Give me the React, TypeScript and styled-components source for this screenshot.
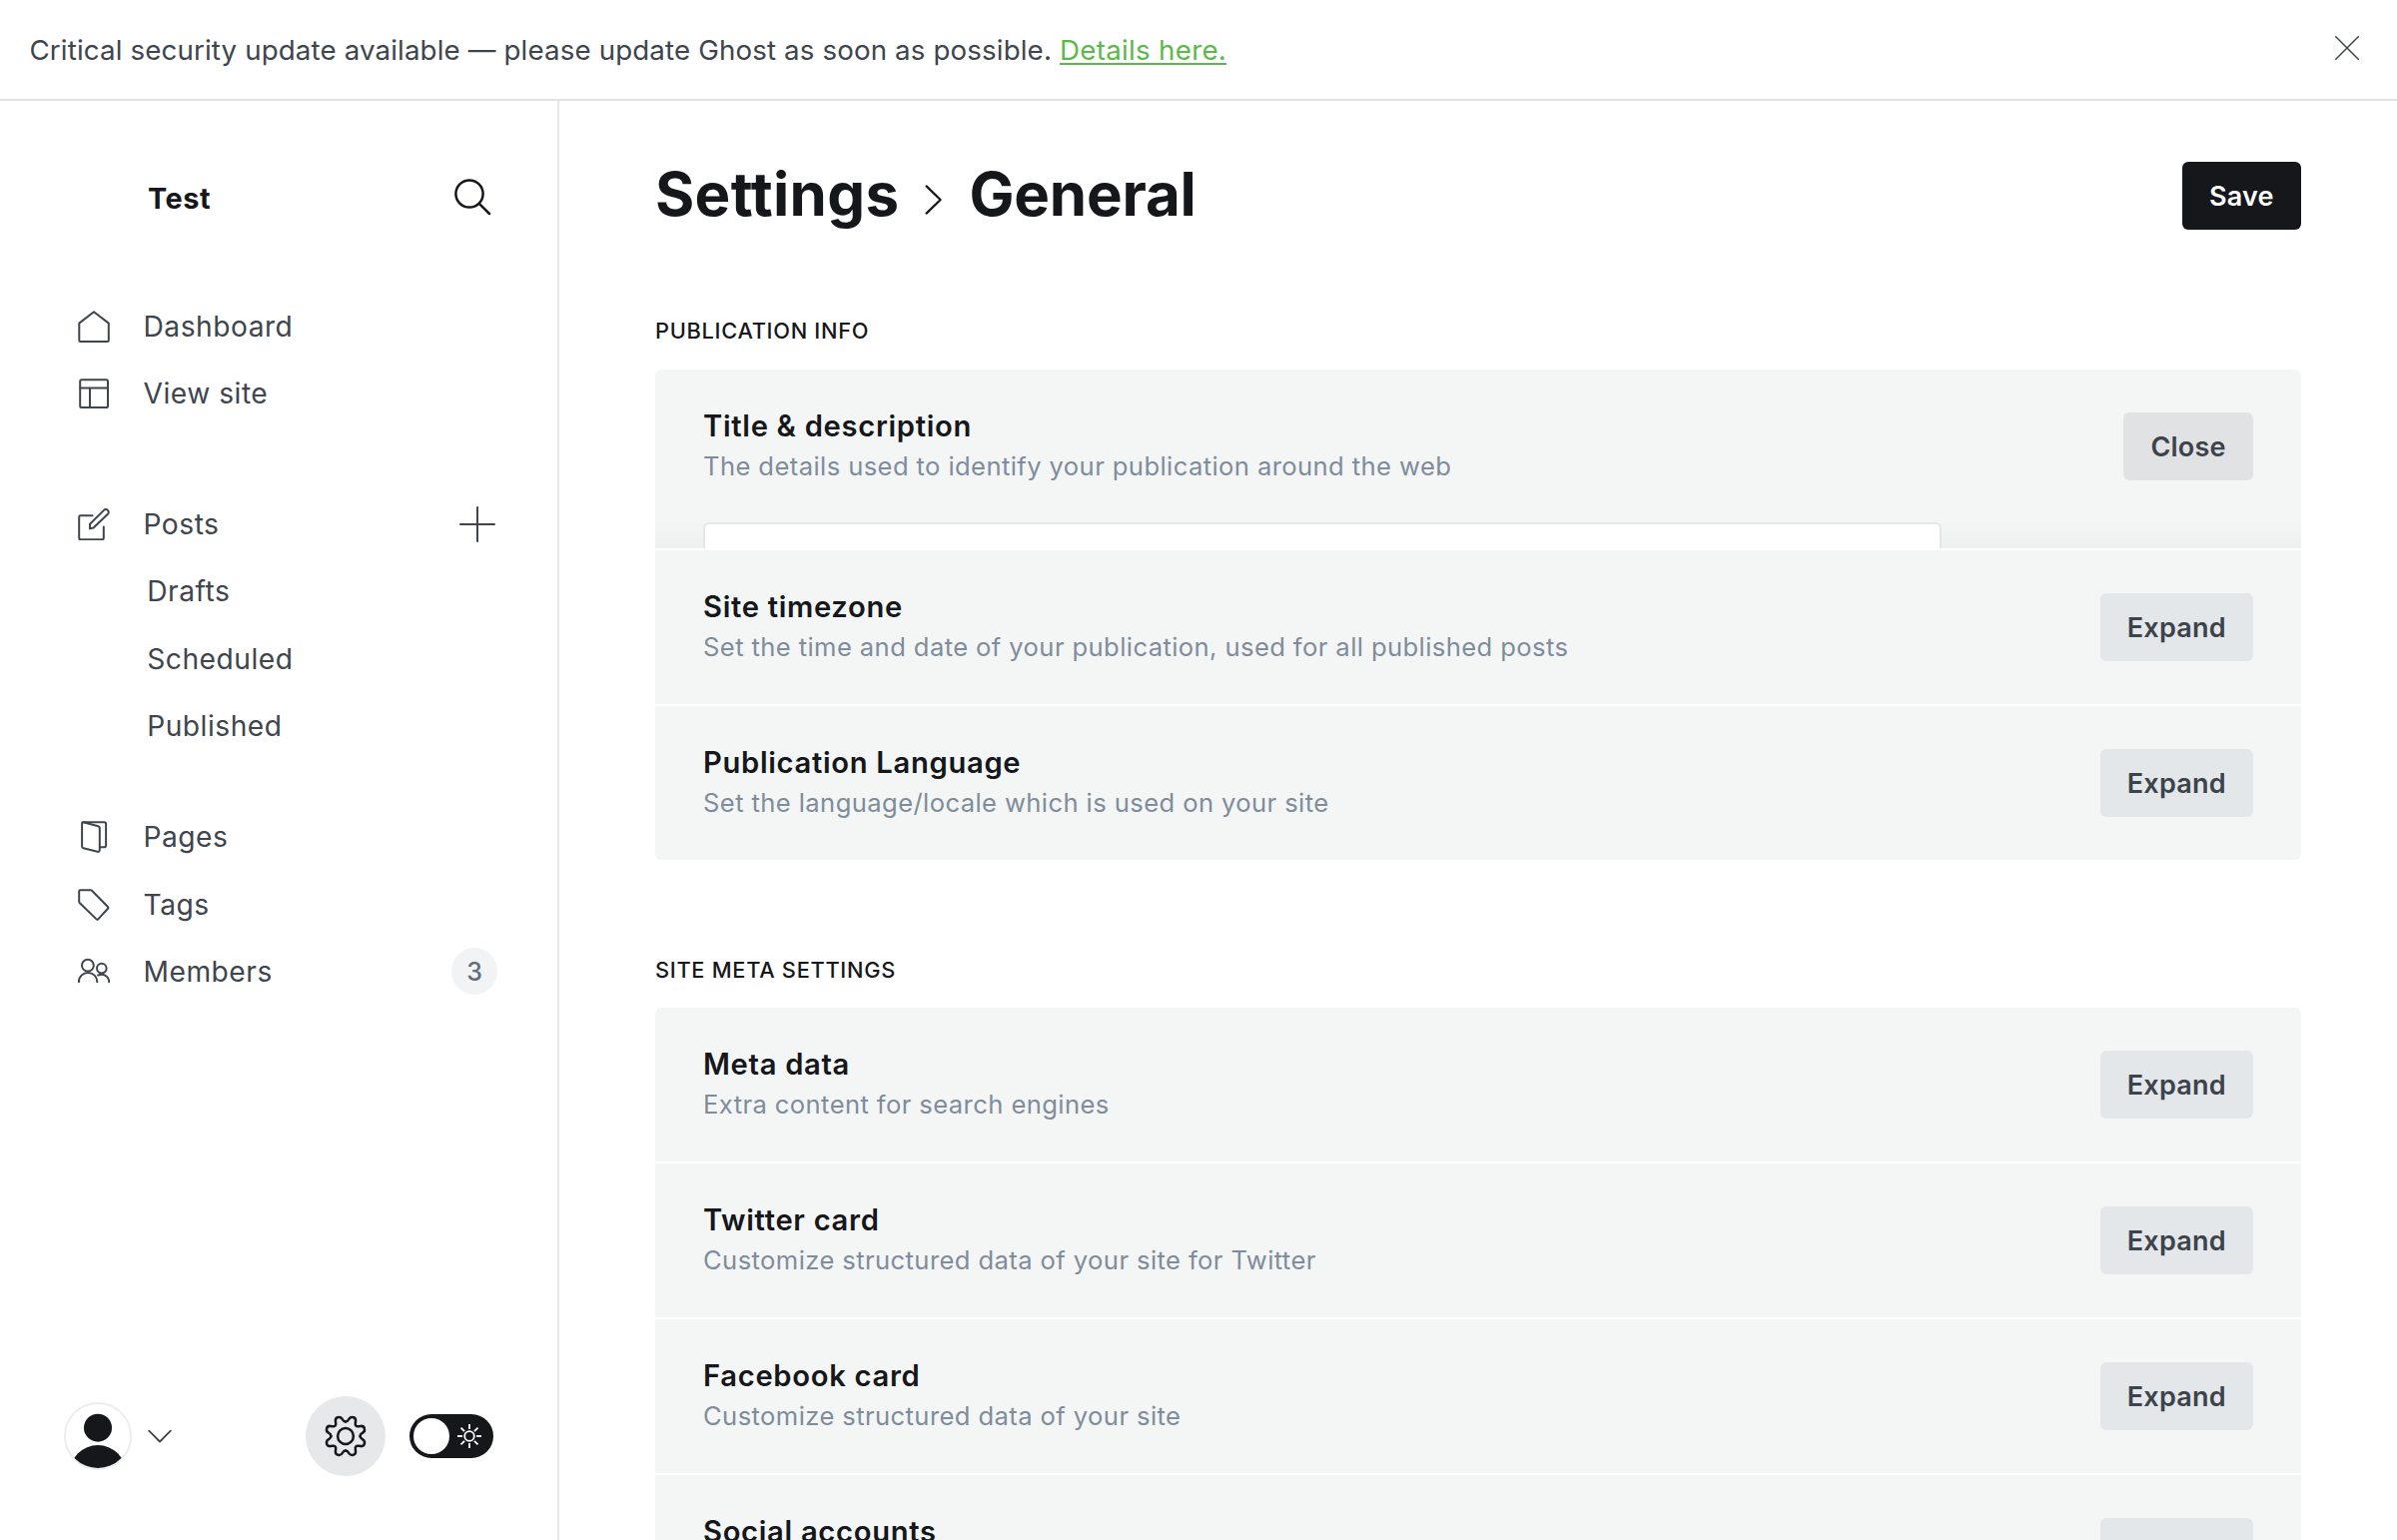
import React from 'react';
import styled, { createGlobalStyle } from 'styled-components';

const ink = '#15171a';
const slate = '#3e454d';
const muted = '#7f8c9b';
const green = '#5ab948';

const GlobalStyle = createGlobalStyle`
  *, *::before, *::after { box-sizing: border-box; }
  body {
    margin: 0;
    background: #fff;
    color: ${ink};
    font-family: Inter, "Noto Sans", sans-serif;
  }
  h1, h2, h3, p { margin: 0; font-weight: inherit; }
  button { font-family: inherit; border: 0; cursor: pointer; }
`;

const Page = styled.div`
  display: flex;
  flex-direction: column;
  width: 100%;
  height: 1542px;
  overflow: hidden;
`;

const Alert = styled.header`
  flex: none;
  display: flex;
  align-items: center;
  justify-content: space-between;
  height: 101px;
  padding: 0 38px 3px 29.5px;
  border-bottom: 2px solid #e0e0e1;
  color: ${slate};
`;

const AlertText = styled.p`
  padding-top: 3px;
  font-size: 27.7px;
  line-height: 40px;
  letter-spacing: 0.14px;
`;

const AlertLink = styled.a`
  color: ${green};
  letter-spacing: 0.3px;
  text-decoration: underline;
  text-decoration-thickness: 2px;
  text-underline-offset: 3px;
`;

const IconButton = styled.button`
  display: flex;
  padding: 0;
  background: none;
  color: inherit;
`;

const Body = styled.div`
  flex: 1;
  display: flex;
  min-height: 0;
`;

const Sidebar = styled.aside`
  flex: none;
  display: flex;
  flex-direction: column;
  width: 560px;
  border-right: 2px solid #e6e7e8;
  color: ${slate};
`;

const SiteHeader = styled.div`
  display: flex;
  align-items: center;
  justify-content: space-between;
  height: 44px;
  margin-top: 74px;
  padding: 0 66px 0 148px;
  color: ${ink};
`;

const SiteName = styled.h2`
  padding-top: 3px;
  font-size: 28.8px;
  font-weight: 700;
  line-height: 40px;
  letter-spacing: 0.6px;
`;

const NavGroup = styled.nav<{ $top: number }>`
  display: flex;
  flex-direction: column;
  margin-top: ${(p) => p.$top}px;
`;

const NavRow = styled.div`
  display: flex;
  align-items: center;
  height: 67.3px;
  padding: 0 60px 0 78px;
`;

const NavLabel = styled.span<{ $sub?: boolean }>`
  flex: 1;
  margin-left: ${(p) => (p.$sub ? 69.2 : 33.5)}px;
  font-size: 28.2px;
  line-height: 40px;
  letter-spacing: 0.5px;
`;

const PlusSlot = styled.span`
  display: flex;
  margin-right: 2px;
`;

const Count = styled.span`
  display: flex;
  align-items: center;
  justify-content: center;
  width: 46px;
  height: 47px;
  border-radius: 50%;
  background: #f1f3f4;
  color: #626d79;
  font-size: 25px;
  font-weight: 500;
`;

const SidebarFooter = styled.div`
  display: flex;
  align-items: center;
  height: 80px;
  margin: auto 64px 64px 64px;
`;

const ProfileMenu = styled.div`
  flex: 1;
  display: flex;
  align-items: center;
  gap: 16px;
`;

const Avatar = styled.div`
  width: 68px;
  height: 68px;
  border: 2px solid #ebeeef;
  border-radius: 50%;
  overflow: hidden;
`;

const SettingsButton = styled.button`
  display: flex;
  align-items: center;
  justify-content: center;
  width: 80px;
  height: 80px;
  margin-right: 24px;
  padding: 0;
  border-radius: 50%;
  background: #e7e8ea;
  color: ${ink};
`;

const ThemeToggle = styled.div`
  display: flex;
  align-items: center;
  gap: 8px;
  width: 84px;
  height: 44px;
  padding: 4px;
  border-radius: 22px;
  background: ${ink};
  color: #fff;
`;

const Knob = styled.span`
  width: 36px;
  height: 36px;
  border-radius: 50%;
  background: #fff;
`;

const Main = styled.main`
  flex: 1;
  display: flex;
  flex-direction: column;
  min-width: 0;
  padding: 61px 96px 0;
  overflow: hidden;
`;

const TitleBar = styled.div`
  flex: none;
  display: flex;
  align-items: center;
  justify-content: space-between;
  height: 68px;
`;

const Breadcrumb = styled.h1`
  display: flex;
  align-items: center;
  font-size: 60px;
  font-weight: 700;
  line-height: 68px;
`;

const Crumb = styled.span<{ $tracking?: number }>`
  padding-bottom: 5px;
  letter-spacing: ${(p) => p.$tracking ?? 0}px;
`;

const CrumbArrow = styled.span`
  display: flex;
  margin: 8px 26.5px 0 25.5px;
`;

const Button = styled.button<{ $tone: 'dark' | 'light' | 'active' }>`
  flex: none;
  height: 68px;
  padding: 1px 27.3px 0;
  border-radius: 6px;
  font-size: 27px;
  font-weight: 600;
  line-height: 67px;
  letter-spacing: 0.2px;
  background: ${(p) => ({ dark: ink, light: '#e3e7ea', active: '#e1e2e4' })[p.$tone]};
  color: ${(p) => (p.$tone === 'dark' ? '#fff' : '#3c434b')};
`;

const SectionLabel = styled.h2<{ $top: number; $gap: number }>`
  flex: none;
  margin-top: ${(p) => p.$top}px;
  margin-bottom: ${(p) => p.$gap}px;
  font-size: 21.8px;
  font-weight: 500;
  line-height: 30px;
  letter-spacing: 0.7px;
  text-transform: uppercase;
`;

const Group = styled.section`
  flex: none;
  display: flex;
  flex-direction: column;
  gap: 2px;
  border-radius: 6px;
  overflow: hidden;
`;

const Block = styled.article<{ $open?: boolean }>`
  height: ${(p) => (p.$open ? 179 : 154)}px;
  padding: 0 48px;
  overflow: hidden;
  background: ${(p) =>
    p.$open ? 'linear-gradient(#f4f6f6 148px, #f1f3f3 165px, #eef0f0 179px)' : '#f4f6f6'};
`;

const BlockHeader = styled.div`
  display: flex;
  align-items: center;
  justify-content: space-between;
  height: 153px;
`;

const BlockText = styled.div`
  display: flex;
  flex-direction: column;
  gap: 4px;
`;

const BlockTitle = styled.h3`
  font-size: 29.2px;
  font-weight: 600;
  line-height: 36px;
  letter-spacing: 0.68px;
`;

const BlockNote = styled.p`
  min-height: 36px;
  color: ${muted};
  font-size: 25.6px;
  line-height: 36px;
  letter-spacing: 0.4px;
`;

const TextField = styled.input`
  display: block;
  width: 1240px;
  height: 76px;
  padding: 0 24px;
  border: 2px solid #e5e7e7;
  border-radius: 6px;
  background: #fff;
  outline: none;
`;

const Line = styled.svg<{ $w?: number; $butt?: boolean }>`
  flex: none;
  display: block;
  fill: none;
  stroke: currentColor;
  stroke-width: ${(p) => p.$w ?? 2};
  stroke-linecap: ${(p) => (p.$butt ? 'butt' : 'round')};
  stroke-linejoin: round;
`;

const CloseIcon = () => (
  <Line width="24" height="24" viewBox="0 0 24 24" $w={1.5}>
    <path d="M.75.75l22.5 22.5M23.25.75L.75 23.25" />
  </Line>
);

const SearchIcon = () => (
  <Line width="38" height="38" viewBox="0 0 38 38" $w={2.5}>
    <circle cx="16" cy="16" r="13.6" />
    <path d="M25.8 25.8L36 36" />
  </Line>
);

const icons: Record<string, React.ReactNode> = {
  home: <path d="M1.3 12.6L16 1.2l14.8 11.4v17.2a1.2 1.2 0 01-1.2 1.2H2.5a1.2 1.2 0 01-1.2-1.2z" />,
  site: (
    <>
      <rect x="2.2" y="2.2" width="27.8" height="27.8" rx="1.6" />
      <path d="M2.2 10.5H30M12 10.5V30" />
    </>
  ),
  edit: (
    <>
      <path d="M14.6 7.2H2.6A1.4 1.4 0 001.2 8.6v21.2a1.4 1.4 0 001.4 1.4h21.8a1.4 1.4 0 001.4-1.4V18.6" />
      <path d="M12 20.4v-4.6L26 1.9a2.6 2.6 0 013.9 0 2.6 2.6 0 010 3.9L15.6 19.5l-3.6.9z" />
    </>
  ),
  pages: (
    <>
      <path d="M5.5 1.2l14.700 4c1 .3 1.600 1 1.600 2v21.900c0 1.300-1 2-2.200 1.700L5.500 27.200c-.9-.2-1.400-.9-1.400-1.800V2.300c0-.8.6-1.300 1.400-1.100z" />
      <path d="M5.500 1.200h20.800a1.800 1.800 0 011.800 1.800v21.400a1.800 1.800 0 01-1.800 1.800h-4.500" />
    </>
  ),
  tag: <path d="M2.400 1.200h10.200c.6 0 1 .2 1.400.6L30 18c.6.600.6 1.200 0 1.800L20.300 30.400c-.6.600-1.100.600-1.700 0L1.900 14.200c-.4-.4-.7-.9-.7-1.500V2.400c0-.7.500-1.200 1.200-1.200z" />,
  members: (
    <>
      <circle cx="9.900" cy="9.700" r="5.900" />
      <path d="M.9 26.200c0-5.200 4-9.200 9.200-9.200s9.200 4 9.200 9.200" />
      <circle cx="23.800" cy="12.600" r="4.800" />
      <path d="M20.200 19.500c5.200-2.200 11 .8 11 6.700" />
    </>
  ),
};

const NavIcon = ({ name }: { name: string }) => (
  <Line width="32" height="32" viewBox="0 0 32 32">
    {icons[name]}
  </Line>
);

const PlusIcon = () => (
  <Line width="36" height="36" viewBox="0 0 36 36">
    <path d="M18 1v34M1 18h34" />
  </Line>
);

const ChevronDown = () => (
  <Line width="24" height="14" viewBox="0 0 24 14" $w={1.8}>
    <path d="M1.200 1.700L12 12.500 22.800 1.700" />
  </Line>
);

const ChevronRight = () => (
  <Line width="18" height="30" viewBox="0 0 18 30" $w={2.2}>
    <path d="M1.600 1.400L15.600 15 1.600 28.600" />
  </Line>
);

const GearIcon = () => (
  <Line width="42" height="42" viewBox="-21 -21 42 42" $w={2.5}>
    <circle r="7.900" />
    {/* one quarter of the rim, repeated around the centre */}
    {[0, 90, 180, 270].map((turn) => (
      <path
        key={turn}
        transform={`rotate(${turn})`}
        d="M0-14.600c1.600 0 2.400-.8 3.100-2.200 1-2 2.200-2.500 4-2.200 2.200.3 3.200 1.600 3 3.800l-.3 2.300c-.3 2.200.9 3.400 3.100 3.100l2.300-.3c2.200-.2 3.500.8 3.800 3 .3 1.800-.2 3-2.200 4-1.400.7-2.200 1.500-2.200 3.100"
      />
    ))}
  </Line>
);

const SunIcon = () => (
  <Line width="24" height="24" viewBox="-12 -12 24 24" $w={1.8} $butt>
    <circle r="4.800" />
    {[0, 45, 90, 135, 180, 225, 270, 315].map((turn) => (
      <path key={turn} transform={`rotate(${turn})`} d="M0-12v5" />
    ))}
  </Line>
);

const Portrait = () => (
  <svg width="64" height="64" viewBox="0 0 64 64" fill={ink}>
    <circle cx="32" cy="23.700" r="14" />
    <circle cx="32" cy="69.200" r="28.200" />
  </svg>
);

type Setting = { title: string; note?: string; open?: boolean };

const publication: Setting[] = [
  { title: 'Title & description', note: 'The details used to identify your publication around the web', open: true },
  { title: 'Site timezone', note: 'Set the time and date of your publication, used for all published posts' },
  { title: 'Publication Language', note: 'Set the language/locale which is used on your site' },
];

const meta: Setting[] = [
  { title: 'Meta data', note: 'Extra content for search engines' },
  { title: 'Twitter card', note: 'Customize structured data of your site for Twitter' },
  { title: 'Facebook card', note: 'Customize structured data of your site' },
  { title: 'Social accounts' },
];

const SettingBlock = ({ title, note, open }: Setting) => (
  <Block $open={open}>
    <BlockHeader>
      <BlockText>
        <BlockTitle>{title}</BlockTitle>
        <BlockNote>{note}</BlockNote>
      </BlockText>
      <Button $tone={open ? 'active' : 'light'}>{open ? 'Close' : 'Expand'}</Button>
    </BlockHeader>
    {open && <TextField aria-label="Site title" />}
  </Block>
);

const NavItem = ({ icon, label, children }: { icon?: string; label: string; children?: React.ReactNode }) => (
  <NavRow>
    {icon && <NavIcon name={icon} />}
    <NavLabel $sub={!icon}>{label}</NavLabel>
    {children}
  </NavRow>
);

export default function App() {
  return (
    <Page>
      <GlobalStyle />
      <Alert>
        <AlertText>
          Critical security update available — please update Ghost as soon as possible. <AlertLink>Details here.</AlertLink>
        </AlertText>
        <IconButton aria-label="Dismiss">
          <CloseIcon />
        </IconButton>
      </Alert>
      <Body>
        <Sidebar>
          <SiteHeader>
            <SiteName>Test</SiteName>
            <SearchIcon />
          </SiteHeader>
          <NavGroup $top={74}>
            <NavItem icon="home" label="Dashboard" />
            <NavItem icon="site" label="View site" />
          </NavGroup>
          <NavGroup $top={63.7}>
            <NavItem icon="edit" label="Posts">
              <PlusSlot>
                <PlusIcon />
              </PlusSlot>
            </NavItem>
            <NavItem label="Drafts" />
            <NavItem label="Scheduled" />
            <NavItem label="Published" />
          </NavGroup>
          <NavGroup $top={44.2}>
            <NavItem icon="pages" label="Pages" />
            <NavItem icon="tag" label="Tags" />
            <NavItem icon="members" label="Members">
              <Count>3</Count>
            </NavItem>
          </NavGroup>
          <SidebarFooter>
            <ProfileMenu>
              <Avatar>
                <Portrait />
              </Avatar>
              <ChevronDown />
            </ProfileMenu>
            <SettingsButton aria-label="Settings">
              <GearIcon />
            </SettingsButton>
            <ThemeToggle>
              <Knob />
              <SunIcon />
            </ThemeToggle>
          </SidebarFooter>
        </Sidebar>
        <Main>
          <TitleBar>
            <Breadcrumb>
              <Crumb $tracking={0.3}>Settings</Crumb>
              <CrumbArrow>
                <ChevronRight />
              </CrumbArrow>
              <Crumb $tracking={-0.2}>General</Crumb>
            </Breadcrumb>
            <Button $tone="dark">Save</Button>
          </TitleBar>
          <SectionLabel $top={86} $gap={24}>Publication info</SectionLabel>
          <Group>
            {publication.map((s) => (
              <SettingBlock key={s.title} {...s} />
            ))}
          </Group>
          <SectionLabel $top={95} $gap={23}>Site meta settings</SectionLabel>
          <Group>
            {meta.map((s) => (
              <SettingBlock key={s.title} {...s} />
            ))}
          </Group>
        </Main>
      </Body>
    </Page>
  );
}
